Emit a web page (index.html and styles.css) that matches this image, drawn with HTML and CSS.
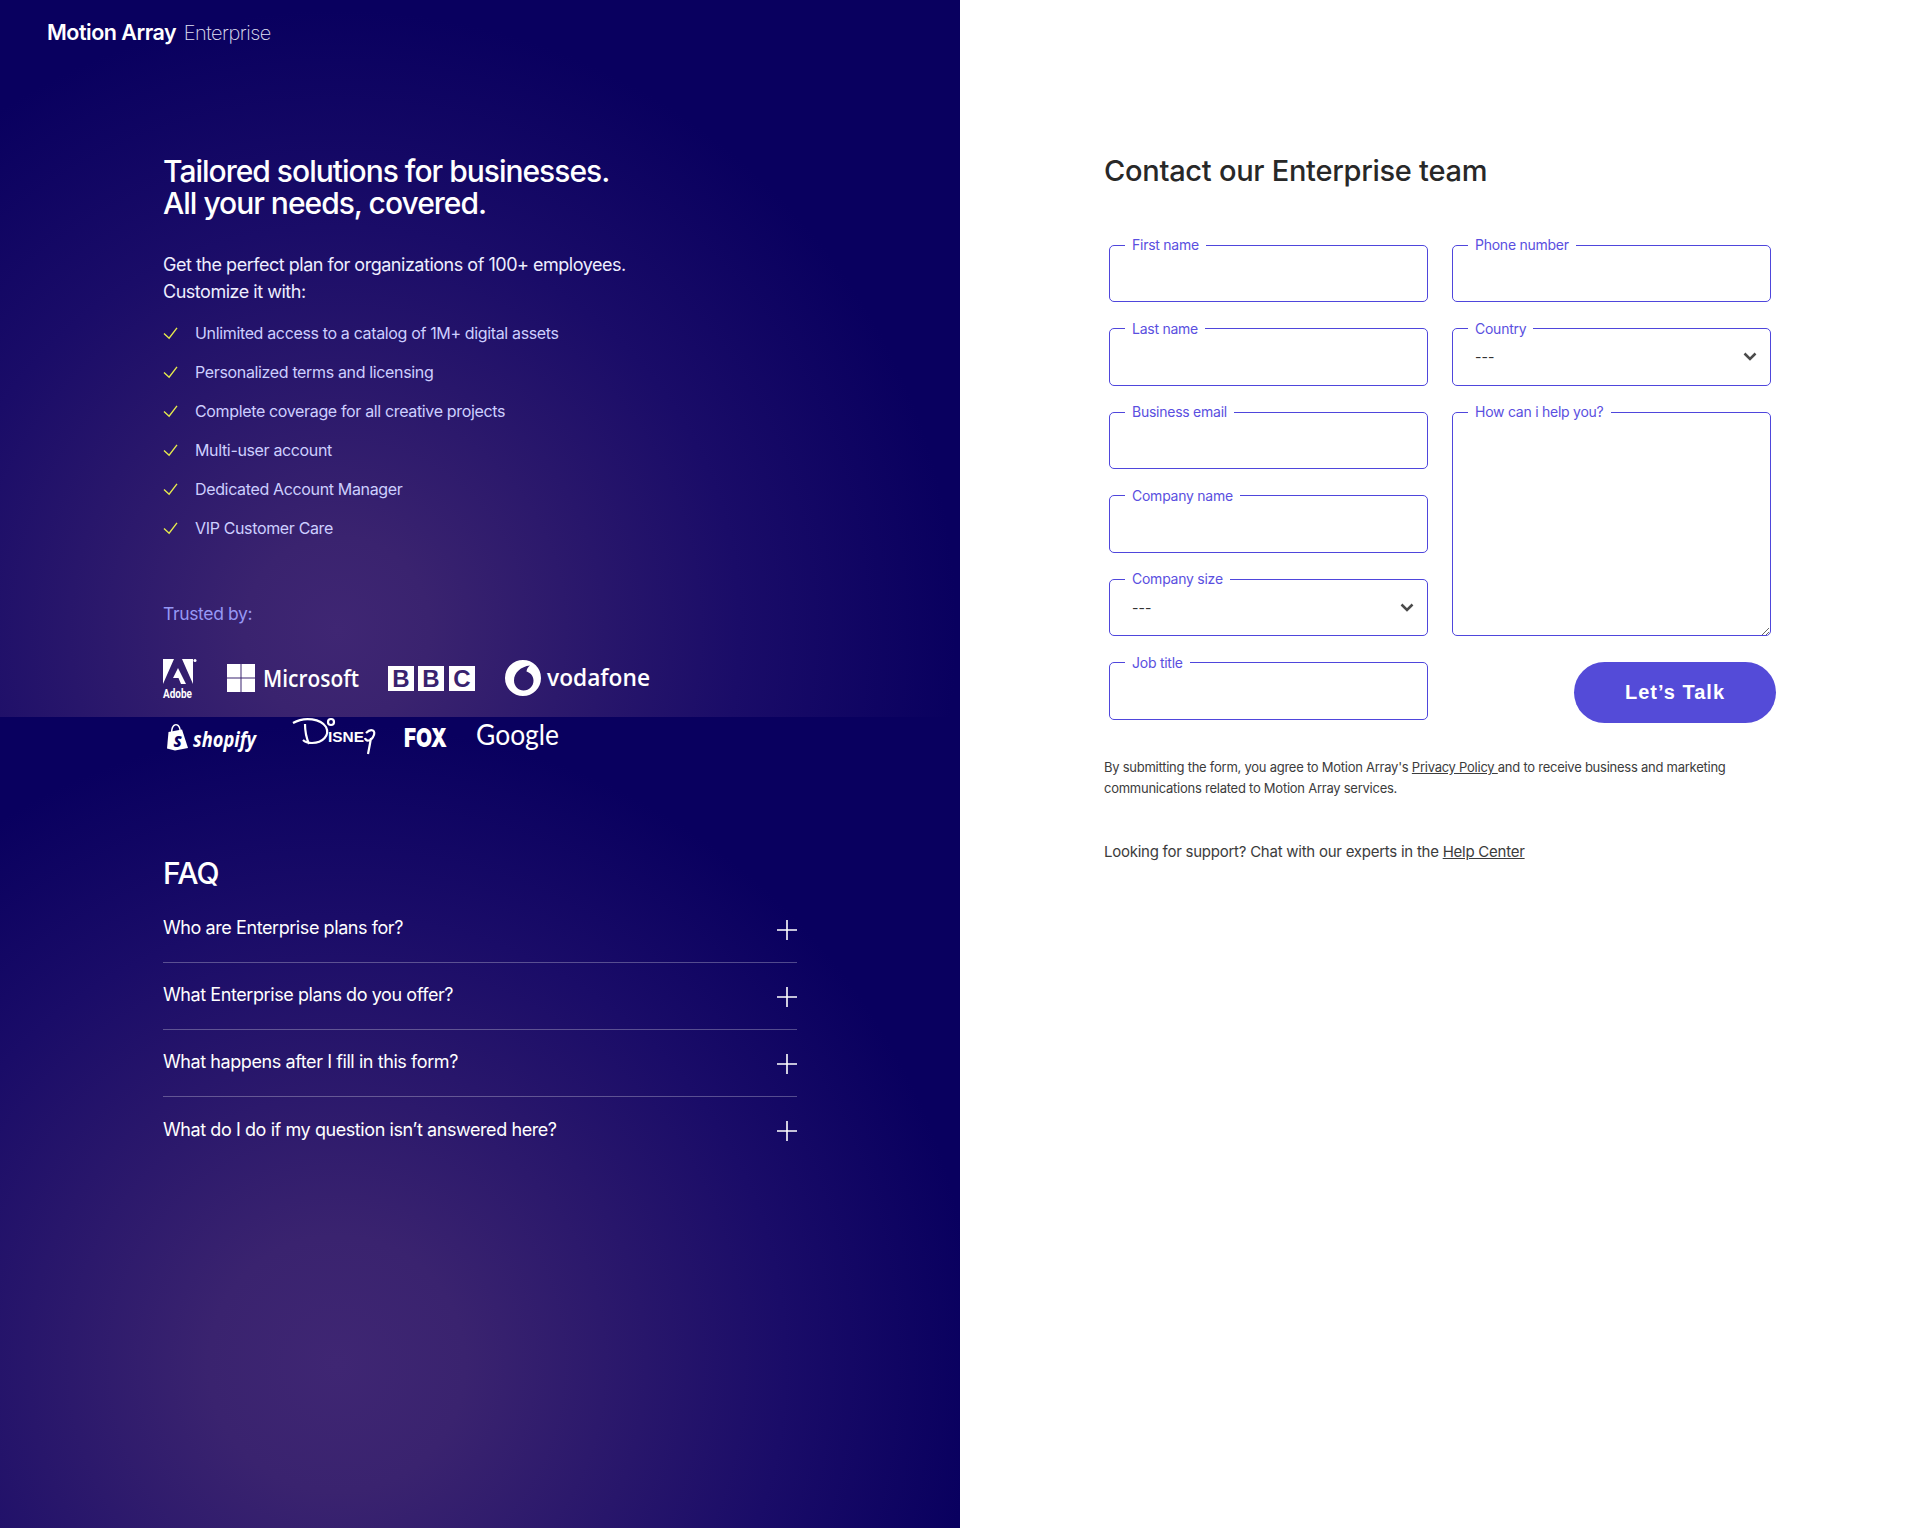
FILE: index.html
```html
<!DOCTYPE html>
<html lang="en">
  <head>
    <meta charset="UTF-8" />
    <meta name="viewport" content="width=device-width, initial-scale=1.0" />
    <title>Motion Array Enterprise</title>
    <link rel="stylesheet" href="styles.css">
  </head>
  <body>
    <div class="page">
      <div class="left">
        <section class="intro">
          <div class="brand"><strong>Motion Array</strong> <span>Enterprise</span></div>
          <div class="intro-body">
            <h1>Tailored solutions for businesses.<br />All your needs, covered.</h1>
            <p class="lead">Get the perfect plan for organizations of 100+ employees.<br />Customize it with:</p>
            <ul class="perks">
              <li><svg viewBox="0 0 16 14"><path d="M1 7l5.500 5L15 1" /></svg>Unlimited access to a catalog of 1M+ digital assets</li>
              <li><svg viewBox="0 0 16 14"><path d="M1 7l5.500 5L15 1" /></svg>Personalized terms and licensing</li>
              <li><svg viewBox="0 0 16 14"><path d="M1 7l5.500 5L15 1" /></svg>Complete coverage for all creative projects</li>
              <li><svg viewBox="0 0 16 14"><path d="M1 7l5.500 5L15 1" /></svg>Multi-user account</li>
              <li><svg viewBox="0 0 16 14"><path d="M1 7l5.500 5L15 1" /></svg>Dedicated Account Manager</li>
              <li><svg viewBox="0 0 16 14"><path d="M1 7l5.500 5L15 1" /></svg>VIP Customer Care</li>
            </ul>
            <p class="trusted">Trusted by:</p>
            <div class="logos">
              <svg class="logo" width="40" height="50" viewBox="0 0 40 50">
                <path d="M11 5H0v25zM19 5h11v25zM15 14l8 16h-5l-2.500-6H10z" />
                <circle cx="32" cy="6.500" r="1.500" />
                <text class="adobe-text" x="0" y="44" textLength="29" lengthAdjust="spacingAndGlyphs">Adobe</text>
              </svg>
              <svg class="logo" width="136" height="50" viewBox="0 0 136 50">
                <path d="M0 10h13.500v13.500H0zM14.500 10H28v13.500H14.500zM0 24.500h13.500V38H0zM14.500 24.500H28V38H14.500z" />
                <text class="ms-text" x="36" y="33" textLength="96" lengthAdjust="spacingAndGlyphs">Microsoft</text>
              </svg>
              <svg class="logo" width="93" height="50" viewBox="0 0 93 50">
                <path d="M1 12h26v25H1zM31 12h26v25H31zM62 12h26v25H62z" />
                <text class="bbc-text" x="14" y="33" text-anchor="middle">B</text>
                <text class="bbc-text" x="44" y="33" text-anchor="middle">B</text>
                <text class="bbc-text" x="75" y="33" text-anchor="middle">C</text>
              </svg>
              <svg class="logo" width="146" height="50" viewBox="0 0 146 50">
                <path fill-rule="evenodd" d="M19 6a18 18 0 1 0 0 36a18 18 0 1 0 0-36zM26 11.500c-9 1-16 7-16 15c0 6 4.500 10 9.500 10c6 0 10-4.500 10-10c0-5-3.500-8-7-9c0-2 1.500-4.500 3.500-6z" />
                <text class="vf-text" x="43" y="32" textLength="103" lengthAdjust="spacingAndGlyphs">vodafone</text>
              </svg>
            </div>
            <div class="logos logos-low">
              <svg class="logo" width="106" height="44" viewBox="0 0 106 44">
                <path d="M8 16c0-5 2-8 5-8s5 3 5 8h-1.500c0-4-1.500-6.500-3.500-6.500s-3.500 2.500-3.500 6.500z" />
                <path d="M5.500 16L19 13.500L25 32L12 34.500L4 32.500z" />
                <text class="shop-s" x="10.500" y="31">S</text>
                <text class="shop-text" x="30" y="31" textLength="63" lengthAdjust="spacingAndGlyphs">shopify</text>
              </svg>
              <svg class="logo" width="87" height="44" viewBox="0 0 87 44">
                <path class="swoosh" d="M0 7C12 0 28 3 33 11C37 19 30 27 19 27C15 27 12 26 10 24M12 8C12 14 13 21 16 28" />
                <circle class="swoosh" cx="38" cy="6" r="3" />
                <text class="disney-text" x="35" y="26" textLength="36" lengthAdjust="spacingAndGlyphs">ISNE</text>
                <path class="swoosh" d="M73 17C78 12 84 14 80 21C78 25 73 26 72 22M78 22C77 28 76 33 75 38" />
              </svg>
              <svg class="logo" width="48" height="44" viewBox="0 0 48 44">
                <text class="fox-text" x="0" y="31" textLength="43" lengthAdjust="spacingAndGlyphs">FOX</text>
              </svg>
              <svg class="logo" width="85" height="44" viewBox="0 0 85 44">
                <text class="google-text" x="0" y="29" textLength="83" lengthAdjust="spacingAndGlyphs">Google</text>
              </svg>
            </div>
          </div>
        </section>
        <section class="faq">
          <h2>FAQ</h2>
          <div class="faq-row"><span>Who are Enterprise plans for?</span><svg viewBox="0 0 20 20"><path d="M10 0v20M0 10h20" /></svg></div>
          <div class="faq-row"><span>What Enterprise plans do you offer?</span><svg viewBox="0 0 20 20"><path d="M10 0v20M0 10h20" /></svg></div>
          <div class="faq-row"><span>What happens after I fill in this form?</span><svg viewBox="0 0 20 20"><path d="M10 0v20M0 10h20" /></svg></div>
          <div class="faq-row"><span>What do I do if my question isn’t answered here?</span><svg viewBox="0 0 20 20"><path d="M10 0v20M0 10h20" /></svg></div>
        </section>
      </div>
      <div class="right">
        <h2 class="contact-title">Contact our Enterprise team</h2>
        <form class="contact">
          <fieldset class="first-name"><legend>First name</legend><input type="text" /></fieldset>
          <fieldset class="phone"><legend>Phone number</legend><input type="text" /></fieldset>
          <fieldset class="last-name"><legend>Last name</legend><input type="text" /></fieldset>
          <fieldset class="country">
            <legend>Country</legend>
            <select><option>---</option></select>
            <svg class="chevron" viewBox="0 0 14 9"><path d="M1.500 1.500L7 7l5.500-5.500" /></svg>
          </fieldset>
          <fieldset class="email"><legend>Business email</legend><input type="email" /></fieldset>
          <fieldset class="help"><legend>How can i help you?</legend><textarea></textarea></fieldset>
          <fieldset class="company"><legend>Company name</legend><input type="text" /></fieldset>
          <fieldset class="size">
            <legend>Company size</legend>
            <select><option>---</option></select>
            <svg class="chevron" viewBox="0 0 14 9"><path d="M1.500 1.500L7 7l5.500-5.500" /></svg>
          </fieldset>
          <fieldset class="job"><legend>Job title</legend><input type="text" /></fieldset>
          <button type="button">Let’s Talk</button>
        </form>
        <p class="legal">By submitting the form, you agree to Motion Array's <a>Privacy Policy </a>and to receive business and marketing<br />communications related to Motion Array services.</p>
        <p class="support">Looking for support? Chat with our experts in the <a>Help Center</a></p>
      </div>
    </div>
  </body>
</html>
```

FILE: styles.css
```css
* {
  box-sizing: border-box;
  margin: 0;
  padding: 0;
}
body {
  background-color: rgb(255, 255, 255);
  font-family: "Inter", sans-serif;
}
.page {
  display: grid;
  grid-template-columns: 960px 960px;
  min-height: 1528px;
}

/* left panel */
.left {
  display: flex;
  flex-direction: column;
  color: white;
}
.intro {
  height: 717px;
  padding: 18px 0 0 47px;
  background-color: #09005f;
  background-image: radial-gradient(
    ellipse 620px 620px at 337px 630px,
    #3f2673 0%,
    #3a236f 15%,
    #1a0c68 65%,
    #09005f 100%
  );
}
.brand {
  height: 28px;
  line-height: 28px;
  font-size: 21.500px;
  letter-spacing: -0.5px;
}
.brand strong {
  font-weight: 600;
}
.brand span {
  font-weight: 200;
  font-size: 20px;
  color: rgb(225, 225, 245);
  margin-left: 2px;
  letter-spacing: -0.5px;
}
.intro-body {
  position: relative;
  padding: 109px 0 0 116px;
}
h1 {
  font-size: 30px;
  line-height: 32px;
  font-weight: 500;
  letter-spacing: -1px;
}
.lead {
  margin-top: 32px;
  font-size: 18px;
  line-height: 27px;
  letter-spacing: -0.48px;
  color: rgb(238, 238, 255);
}
.perks {
  list-style: none;
  margin-top: 8.500px;
}
.perks li {
  display: flex;
  align-items: center;
  gap: 17px;
  height: 39px;
  font-size: 16px;
  letter-spacing: -0.35px;
  color: rgb(205, 207, 255);
}
.perks svg {
  width: 15px;
  height: 13px;
  flex: none;
  fill: none;
  stroke: #e6ea4c;
  stroke-width: 1.500;
}
.trusted {
  margin-top: 52.500px;
  font-size: 17.500px;
  line-height: 28px;
  letter-spacing: -0.35px;
  color: rgb(150, 152, 245);
}
.logos {
  display: flex;
  gap: 24px;
  margin-top: 26px;
}
.logos-low {
  margin-top: 12px;
}
.logo {
  flex: none;
  fill: white;
  overflow: visible;
}
.adobe-text {
  font-family: "Roboto", sans-serif;
  font-size: 12px;
  font-weight: 700;
}
.ms-text {
  font-family: "Open Sans", sans-serif;
  font-size: 24px;
  font-weight: 600;
}
.bbc-text {
  font-family: "Liberation Sans", sans-serif;
  font-size: 24px;
  font-weight: 700;
  fill: #39236f;
}
.vf-text {
  font-family: "Open Sans", sans-serif;
  font-size: 24px;
  font-weight: 600;
}
.shop-s {
  font-family: "Open Sans", sans-serif;
  font-size: 15px;
  font-weight: 800;
  font-style: italic;
  fill: #09005f;
}
.shop-text {
  font-family: "Open Sans", sans-serif;
  font-size: 21px;
  font-weight: 700;
  font-style: italic;
}
.disney-text {
  font-family: "Liberation Sans", sans-serif;
  font-size: 14px;
  font-weight: 700;
}
.swoosh {
  fill: none;
  stroke: white;
  stroke-width: 2.200;
}
.fox-text {
  font-family: "Inter", sans-serif;
  font-size: 26px;
  font-weight: 900;
}
.google-text {
  font-family: "Lato", sans-serif;
  font-size: 29px;
  font-weight: 400;
}
.faq {
  flex: 1;
  padding: 138px 163px 0 163px;
  background-color: #09005f;
  background-image: radial-gradient(
    ellipse 640px 640px at 337px 647px,
    #3f2673 0%,
    #3a236f 20%,
    #1a0c68 70%,
    #09005f 100%
  );
}
.faq h2 {
  font-size: 30px;
  line-height: 36px;
  font-weight: 500;
  letter-spacing: -0.8px;
  margin-bottom: 4.500px;
}
.faq-row {
  display: flex;
  justify-content: space-between;
  align-items: center;
  height: 67px;
  border-bottom: 1px solid rgba(255, 255, 255, 0.28);
  font-size: 18px;
  letter-spacing: -0.42px;
}
.faq-row:last-child {
  border-bottom: none;
}
.faq-row span {
  margin-top: -2px;
}
.faq-row svg {
  width: 20px;
  height: 20px;
  margin-top: 2px;
  fill: none;
  stroke: white;
  stroke-width: 1.600;
}

/* right panel */
.right {
  padding: 153px 0 0 144px;
  color: rgb(60, 60, 60);
}
.contact-title {
  font-size: 29px;
  line-height: 36px;
  font-weight: 500;
  letter-spacing: -0.27px;
  color: rgb(40, 40, 40);
}
.contact {
  display: grid;
  grid-template-columns: 319px 319px;
  grid-auto-rows: 64px;
  column-gap: 24px;
  row-gap: 19.500px;
  margin-top: 49px;
  margin-left: 5px;
  width: 662px;
  grid-template-areas:
    "first phone"
    "last country"
    "email help"
    "company help"
    "size help"
    "job send";
}
.first-name { grid-area: first; }
.phone { grid-area: phone; }
.last-name { grid-area: last; }
.country { grid-area: country; }
.email { grid-area: email; }
.help { grid-area: help; }
.company { grid-area: company; }
.size { grid-area: size; }
.job { grid-area: job; }
fieldset {
  position: relative;
  border: 1px solid #4f46dc;
  border-radius: 5px;
  padding: 0 22px;
  min-width: 0;
}
legend {
  margin-left: -7px;
  padding: 0 7px;
  font-size: 14px;
  line-height: 1;
  letter-spacing: -0.25px;
  color: #5a4fe0;
}
fieldset input,
fieldset select {
  display: block;
  width: 100%;
  height: 42px;
  border: none;
  outline: none;
  background: transparent;
  font-family: inherit;
  font-size: 14px;
  color: rgb(50, 50, 50);
  appearance: none;
}
fieldset textarea {
  display: block;
  width: calc(100% + 44px);
  height: 217px;
  margin-left: -22px;
  border: none;
  outline: none;
  background: transparent;
}
.chevron {
  position: absolute;
  right: 13px;
  top: 16.500px;
  width: 14px;
  height: 9px;
  fill: none;
  stroke: rgb(75, 75, 75);
  stroke-width: 2.500;
  pointer-events: none;
}
button {
  grid-area: send;
  justify-self: end;
  align-self: start;
  width: 202px;
  height: 61px;
  margin-top: 6px;
  margin-right: -5px;
  border: none;
  border-radius: 31px;
  background-color: #544bd8;
  color: white;
  font-family: "Liberation Sans", sans-serif;
  font-size: 20px;
  font-weight: 700;
  letter-spacing: 1px;
}
.legal {
  margin-top: 37.500px;
  font-size: 13px;
  line-height: 21px;
  letter-spacing: -0.25px;
}
.support {
  margin-top: 42px;
  font-size: 15px;
  line-height: 21px;
  letter-spacing: -0.25px;
}
.right a {
  color: inherit;
  text-decoration: underline;
}
```
